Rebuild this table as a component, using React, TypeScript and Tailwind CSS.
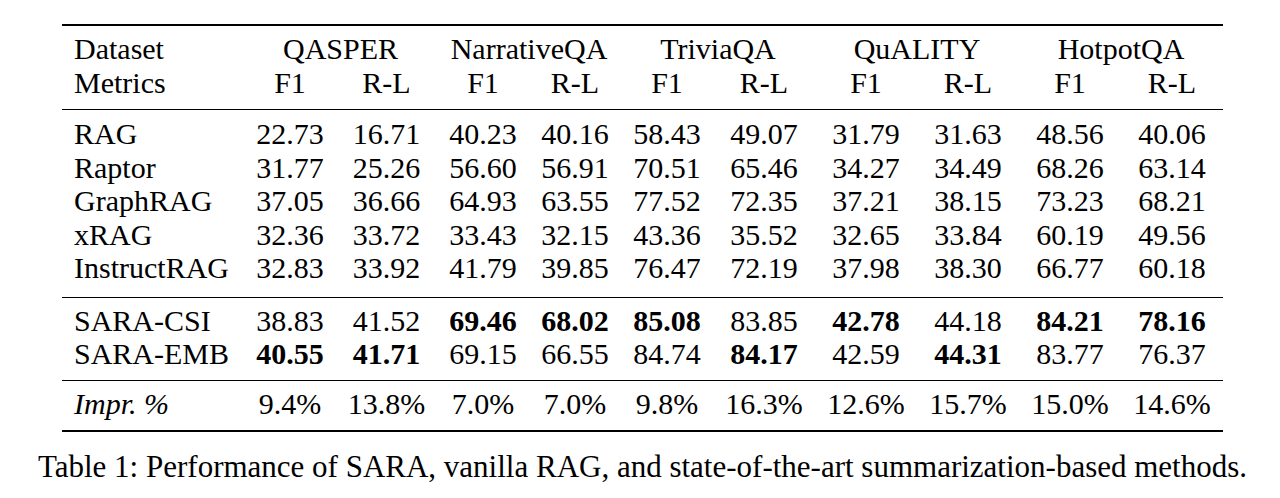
import React from "react";

const cols =
  "grid grid-cols-[182px_92px_101px_92px_92px_92px_102px_102px_102px_102px_102px]";

const datasets = ["QASPER", "NarrativeQA", "TriviaQA", "QuALITY", "HotpotQA"];

// "*" in front of a value means it is printed bold
const baselines: [string, string[]][] = [
  ["RAG", ["22.73", "16.71", "40.23", "40.16", "58.43", "49.07", "31.79", "31.63", "48.56", "40.06"]],
  ["Raptor", ["31.77", "25.26", "56.60", "56.91", "70.51", "65.46", "34.27", "34.49", "68.26", "63.14"]],
  ["GraphRAG", ["37.05", "36.66", "64.93", "63.55", "77.52", "72.35", "37.21", "38.15", "73.23", "68.21"]],
  ["xRAG", ["32.36", "33.72", "33.43", "32.15", "43.36", "35.52", "32.65", "33.84", "60.19", "49.56"]],
  ["InstructRAG", ["32.83", "33.92", "41.79", "39.85", "76.47", "72.19", "37.98", "38.30", "66.77", "60.18"]],
];

const ours: [string, string[]][] = [
  ["SARA-CSI", ["38.83", "41.52", "*69.46", "*68.02", "*85.08", "83.85", "*42.78", "44.18", "*84.21", "*78.16"]],
  ["SARA-EMB", ["*40.55", "*41.71", "69.15", "66.55", "84.74", "*84.17", "42.59", "*44.31", "83.77", "76.37"]],
];

const impr = ["9.4%", "13.8%", "7.0%", "7.0%", "9.8%", "16.3%", "12.6%", "15.7%", "15.0%", "14.6%"];

function Row({ name, values }: { name: string; values: string[] }) {
  return (
    <div className={cols}>
      <div className="pl-[12px]">{name}</div>
      {values.map((v, i) =>
        v.startsWith("*") ? (
          <div key={i} className="text-center font-bold">
            {v.slice(1)}
          </div>
        ) : (
          <div key={i} className="text-center">
            {v}
          </div>
        )
      )}
    </div>
  );
}

export default function App() {
  return (
    <div
      className="min-h-screen bg-white text-black flex flex-col items-center pt-[24px] pl-[5px] text-[30px] leading-[33.5px]"
      style={{ fontFamily: '"Liberation Serif", "Times New Roman", serif' }}
    >
      <div className="w-[1161px]">
        <div className="h-[2px] bg-black" />

        <div className="pt-[6px] pb-[10px]">
          <div className={cols}>
            <div className="pl-[12px]">Dataset</div>
            {datasets.map((d) => (
              <div key={d} className="col-span-2 text-center">
                {d}
              </div>
            ))}
          </div>
          <div className={cols}>
            <div className="pl-[12px]">Metrics</div>
            {datasets.map((d) => (
              <React.Fragment key={d}>
                <div className="text-center">F1</div>
                <div className="text-center">R-L</div>
              </React.Fragment>
            ))}
          </div>
        </div>

        <div className="h-px bg-black" />

        <div className="pt-[7px] pb-[12px]">
          {baselines.map(([name, values]) => (
            <Row key={name} name={name} values={values} />
          ))}
        </div>

        <div className="h-px bg-black" />

        <div className="pt-[6px] pb-[9px]">
          {ours.map(([name, values]) => (
            <Row key={name} name={name} values={values} />
          ))}
        </div>

        <div className="h-px bg-black" />

        <div className="pt-[6px] pb-[10px]">
          <div className={cols}>
            <div className="pl-[12px] italic">Impr. %</div>
            {impr.map((v, i) => (
              <div key={i} className="text-center">
                {v}
              </div>
            ))}
          </div>
        </div>

        <div className="h-[2px] bg-black" />
      </div>

      <p className="mt-[18px] whitespace-nowrap text-[31px]">
        Table 1: Performance of SARA, vanilla RAG, and state-of-the-art summarization-based methods.
      </p>
    </div>
  );
}
